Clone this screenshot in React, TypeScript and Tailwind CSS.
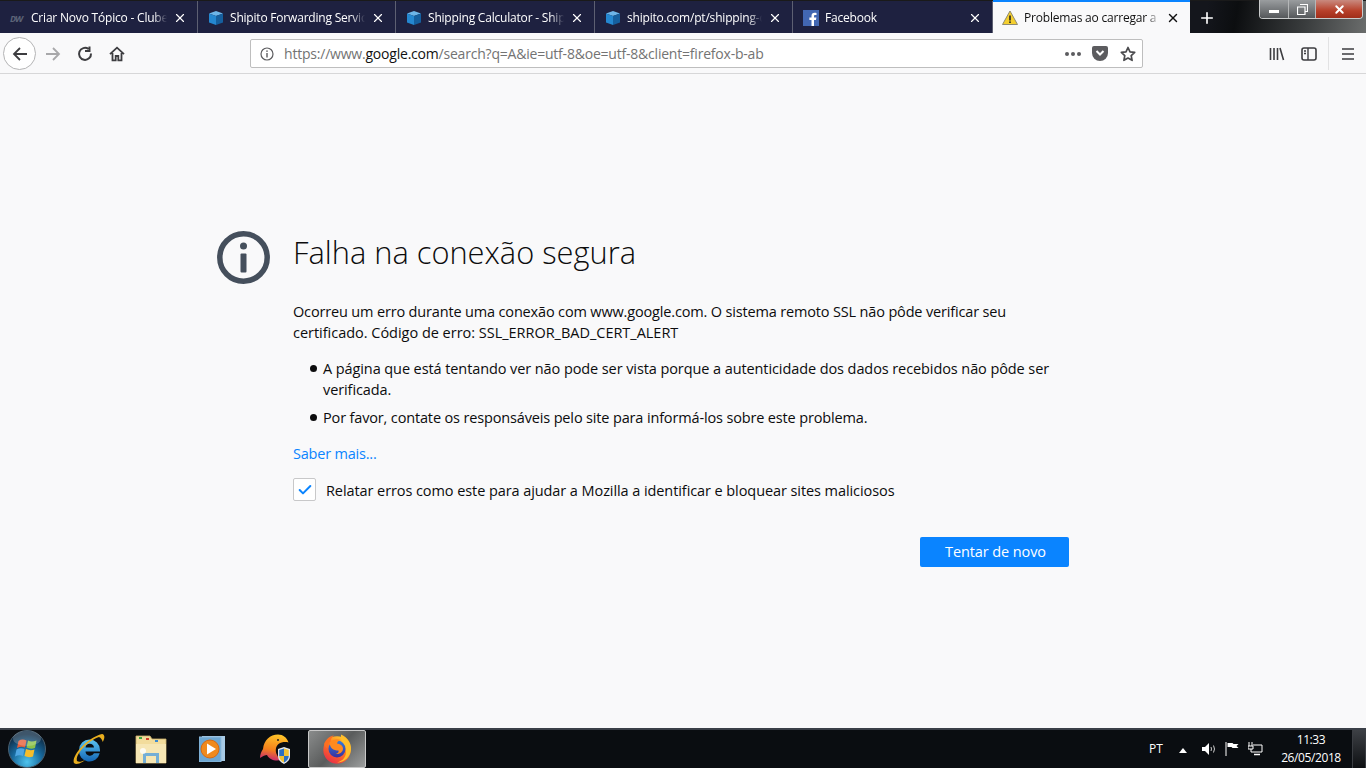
import { Check, Plus, X } from 'lucide-react'

const UI_FONT = "font-['Open_Sans','Noto_Sans',sans-serif]"

function CubeIcon() {
  return (
    <svg width="16" height="16" viewBox="0 0 16 16" className="shrink-0">
      <path d="M1 3.500 8 1l7 2.500-7 2.500z" fill="#6db5e8" />
      <path d="M1 3.500 8 6v9l-7-2.500z" fill="#2487d0" />
      <path d="M15 3.500 8 6v9l7-2.500z" fill="#155f9e" />
    </svg>
  )
}

function ClubeIcon() {
  return (
    <span className="w-[15px] shrink-0 text-[9px] font-bold italic leading-none tracking-[-1px] text-[#5c6478]">
      DW
    </span>
  )
}

function FacebookIcon() {
  return (
    <svg width="16" height="16" viewBox="0 0 16 16" className="shrink-0">
      <rect width="16" height="16" fill="#4267b2" />
      <path d="M11 16v-6h2l.4-2.400H11V6.200c0-.7.3-1.200 1.200-1.200h1.300V2.900c-.5-.1-1.200-.1-1.900-.1-1.900 0-3.100 1.100-3.100 3.200v1.600H6.400V10h2.100v6z" fill="#fff" />
    </svg>
  )
}

function WarningIcon() {
  return (
    <svg width="16" height="16" viewBox="0 0 16 16" className="shrink-0">
      <path d="M8 1 15.500 14.500H.5z" fill="#f5cf2e" stroke="#8f8a70" strokeWidth="1" strokeLinejoin="round" />
      <rect x="7.200" y="5.500" width="1.600" height="5" fill="#222" />
      <rect x="7.200" y="11.400" width="1.600" height="1.600" fill="#222" />
    </svg>
  )
}

const TABS = [
  { title: 'Criar Novo Tópico - Clube', icon: <ClubeIcon />, width: 'w-[198px]' },
  { title: 'Shipito Forwarding Service', icon: <CubeIcon />, width: 'w-[198px]' },
  { title: 'Shipping Calculator - Shipi', icon: <CubeIcon />, width: 'w-[199px]' },
  { title: 'shipito.com/pt/shipping-c', icon: <CubeIcon />, width: 'w-[198px]' },
  { title: 'Facebook', icon: <FacebookIcon />, width: 'w-[200px]' },
]

function TabBar() {
  return (
    <div className="flex h-[33px] shrink-0 border-t border-t-[#1a1a1a] bg-[linear-gradient(100deg,#14161c_0,#14161c_1190px,#0c0e10_1220px,#3a3d3e_1290px,#777978_1366px)]">
      {TABS.map((tab) => (
        <div
          key={tab.title}
          className={`${tab.width} flex h-full items-center border-r border-r-[#5d6072] bg-[#1e2140] pl-[10px] pr-[10px] pt-[2px] text-white`}
        >
          {tab.icon}
          <span className="ml-[6px] min-w-0 flex-1 overflow-hidden whitespace-nowrap text-[12px] tracking-[-0.2px] [mask-image:linear-gradient(90deg,#000_90%,transparent)]">
            {tab.title}
          </span>
          <X size={14} strokeWidth={2} className="ml-[6px] shrink-0" />
        </div>
      ))}
      <div className="relative flex h-full w-[197px] items-center bg-[#f9f9fa] pl-[9px] pr-[10px] pt-[2px] text-[#111]">
        <div className="absolute inset-x-0 -top-px h-[2px] bg-[#0a84ff]" />
        <WarningIcon />
        <span className="ml-[6px] min-w-0 flex-1 overflow-hidden whitespace-nowrap text-[12px] tracking-[-0.2px] [mask-image:linear-gradient(90deg,#000_90%,transparent)]">
          Problemas ao carregar a página
        </span>
        <X size={14} strokeWidth={2.400} className="ml-[6px] shrink-0" />
      </div>
      <div className="flex h-full w-[34px] items-center justify-center pt-[1px] text-white">
        <Plus size={18} strokeWidth={2.200} />
      </div>
      <div className="flex flex-1 justify-end">
        <div className="mr-[3px] -mt-px flex h-[19px] w-[104px] overflow-hidden rounded-b-[4px] border border-t-0 border-[#c9cbcc]">
          <div className="flex w-[29px] items-center justify-center border-r border-[#b5b7b8] bg-[linear-gradient(#9a9d9f,#55585b)]">
            <div className="mt-[4px] h-[3px] w-[10px] bg-white" />
          </div>
          <div className="flex w-[27px] items-center justify-center border-r border-[#b5b7b8] bg-[linear-gradient(#9a9d9f,#55585b)]">
            <svg width="11" height="11" viewBox="0 0 11 11">
              <path d="M3 .5h7.500v7H8M.5 3h7.500v7.500H.5z" fill="none" stroke="#fff" strokeWidth="1.200" />
            </svg>
          </div>
          <div className="flex flex-1 items-center justify-center bg-[linear-gradient(#c98a7f,#b7402a_60%,#a02e1a)]">
            <X size={13} strokeWidth={3.500} className="text-white" />
          </div>
        </div>
      </div>
    </div>
  )
}

function ToolbarIcon({ children, className = '' }: { children: React.ReactNode; className?: string }) {
  return (
    <svg width="16" height="16" viewBox="0 0 16 16" fill="none" stroke="#3d3d40" strokeWidth="1.700" className={`shrink-0 ${className}`}>
      {children}
    </svg>
  )
}

function Toolbar() {
  return (
    <div className="flex h-[41px] shrink-0 items-center border-b border-[#d7d7d8] bg-[#f9f9fa] pt-[1px]">
      <div className="ml-[3px] flex h-[33px] w-[33px] shrink-0 items-center justify-center rounded-full border border-[#b4b4b5] bg-white">
        <ToolbarIcon>
          <path d="M15 8H2M8 2 2 8l6 6" strokeWidth="1.800" />
        </ToolbarIcon>
      </div>
      <ToolbarIcon className="ml-[9px]">
        <path d="M1 8h13M8 2l6 6-6 6" stroke="#a8a8aa" strokeWidth="1.800" />
      </ToolbarIcon>
      <ToolbarIcon className="ml-[16px]">
        <path d="M14 7.500A6 6 0 1 1 11.500 3M12.500 .5V5H8" strokeWidth="2" />
      </ToolbarIcon>
      <ToolbarIcon className="ml-[16px]">
        <path d="M1 8.200 8 1.700l7 6.500M3.500 7v7.300h3.200V10h2.600v4.300h3.200V7" strokeWidth="1.800" />
      </ToolbarIcon>
      <div className="ml-[125px] flex h-[29px] w-[893px] shrink-0 items-center rounded-[2px] border border-[#bebebe] bg-white pl-[9px] pr-[6px]">
        <svg width="14" height="14" viewBox="0 0 14 14" className="shrink-0">
          <circle cx="7" cy="7" r="6" fill="none" stroke="#5c5c5f" strokeWidth="1.200" />
          <rect x="6.300" y="6" width="1.400" height="4.500" fill="#5c5c5f" />
          <rect x="6.300" y="3.400" width="1.400" height="1.500" fill="#5c5c5f" />
        </svg>
        <span className="ml-[10px] flex-1 whitespace-nowrap text-[14px] tracking-[-0.21px] text-[#737373]">
          https://www.<span className="text-[#111]">google.com</span>/search?q=A&amp;ie=utf-8&amp;oe=utf-8&amp;client=firefox-b-ab
        </span>
        <div className="flex gap-[2px]">
          <span className="h-[4px] w-[4px] rounded-full bg-[#5c5c5f]" />
          <span className="h-[4px] w-[4px] rounded-full bg-[#5c5c5f]" />
          <span className="h-[4px] w-[4px] rounded-full bg-[#5c5c5f]" />
        </div>
        <svg width="16" height="15" viewBox="0 0 16 15" className="ml-[11px] shrink-0">
          <path d="M2 0h12a2 2 0 0 1 2 2v5a8 8 0 0 1-16 0V2a2 2 0 0 1 2-2z" fill="#5c5c5f" />
          <path d="M4.500 5 8 8.500 11.500 5" fill="none" stroke="#fff" strokeWidth="2" />
        </svg>
        <svg width="16" height="16" viewBox="0 0 16 16" className="ml-[12px] shrink-0">
          <path d="m8 1.500 2 4.300 4.700.6-3.500 3.200.9 4.700L8 12l-4.100 2.300.9-4.700L1.300 6.400 6 5.800z" fill="none" stroke="#4a4a4d" strokeWidth="1.700" strokeLinejoin="round" />
        </svg>
      </div>
      <ToolbarIcon className="ml-[126px]">
        <path d="M1.500 2v12M5 2v12M8.500 2v12M11 2l3.500 12" strokeWidth="1.600" />
      </ToolbarIcon>
      <ToolbarIcon className="ml-[16px]">
        <rect x="1" y="2" width="14" height="12" rx="2" strokeWidth="1.600" />
        <path d="M7 2v12M3 5h2M3 7.500h2" strokeWidth="1.400" />
      </ToolbarIcon>
      <div className="ml-[11px] h-[33px] w-px bg-[#e2e2e3]" />
      <ToolbarIcon className="ml-[11px]">
        <path d="M2 3h12M2 8h12M2 13h12" strokeWidth="1.700" />
      </ToolbarIcon>
    </div>
  )
}

function Bullet({ children, className = '' }: { children: React.ReactNode; className?: string }) {
  return (
    <li className={`flex ${className}`}>
      <span className="mt-[7px] h-[7px] w-[7px] shrink-0 rounded-full bg-[#0c0c0d]" />
      <span className="ml-[6px]">{children}</span>
    </li>
  )
}

function ErrorPage() {
  return (
    <main className="flex min-h-0 flex-1 justify-start bg-[#f9f9fa] pl-[217px] pt-[157px] text-[#0c0c0d]">
      <svg width="54" height="54" viewBox="0 0 54 54" className="shrink-0">
        <circle cx="26.500" cy="26.500" r="23.700" fill="none" stroke="#454f5c" strokeWidth="5.500" />
        <circle cx="26.500" cy="15" r="3.500" fill="#454f5c" />
        <rect x="23.500" y="22.500" width="6" height="19" rx="1" fill="#454f5c" />
      </svg>
      <div className="ml-[22px] w-[776px]">
        <h1 className="-mt-[1px] text-[30.800px] font-light leading-[44px]">Falha na conexão segura</h1>
        <p className="mt-[27px] text-[14.500px] leading-[21px] tracking-[-0.16px]">
          Ocorreu um erro durante uma conexão com www.google.com. O sistema remoto SSL não pôde verificar seu
          <br />
          <span className="tracking-[-0.02px]">certificado. Código de erro: SSL_ERROR_BAD_CERT_ALERT</span>
        </p>
        <ul className="mt-[15px] pl-[17px] text-[14.500px] leading-[21px]">
          <Bullet className="tracking-[-0.09px]">
            A página que está tentando ver não pode ser vista porque a autenticidade dos dados recebidos não pôde ser verificada.
          </Bullet>
          <Bullet className="mt-[7px] tracking-[-0.15px]">
            Por favor, contate os responsáveis pelo site para informá-los sobre este problema.
          </Bullet>
        </ul>
        <a className="mt-[15px] block text-[14.500px] leading-[21px] tracking-[-0.2px] text-[#0a84ff]">Saber mais...</a>
        <label className="mt-[14px] flex items-center">
          <span className="flex h-[23px] w-[23px] items-center justify-center rounded-[2px] border border-[#c8c8c9] bg-white">
            <Check size={16} strokeWidth={3} className="text-[#0a84ff]" />
          </span>
          <span className="ml-[10px] pt-[2px] text-[14.500px] leading-[21px] tracking-[-0.08px]">
            Relatar erros como este para ajudar a Mozilla a identificar e bloquear sites maliciosos
          </span>
        </label>
        <div className="mt-[36px] flex justify-end">
          <button type="button" className="h-[30px] w-[149px] rounded-[2px] bg-[#0a84ff] pl-[2px] text-[14.500px] tracking-[-0.1px] text-white">
            Tentar de novo
          </button>
        </div>
      </div>
    </main>
  )
}

function WindowsOrb() {
  return (
    <svg width="38" height="38" viewBox="0 0 38 38" className="shrink-0">
      <defs>
        <radialGradient id="orb" cx="50%" cy="85%" r="75%">
          <stop offset="0" stopColor="#4fc4ee" />
          <stop offset="0.55" stopColor="#17689c" />
          <stop offset="1" stopColor="#0e2c46" />
        </radialGradient>
      </defs>
      <circle cx="19" cy="19" r="18.500" fill="url(#orb)" stroke="#4a6070" />
      <path d="M10.500 11q3.500-2.500 8-.5l-1.500 7q-4-1.800-8 .5z" fill="#e8603a" />
      <path d="M20 10.500q3.500 2 8.500 0l-1.500 7.500q-4.500 1.500-8.500-.5z" fill="#8dc24a" />
      <path d="M8.500 19.500q4-2.300 8-.5l-1.500 7q-4-1.500-8 .5z" fill="#4fa6e2" />
      <path d="M18 19q4 2 8.500.5l-1.500 7q-4.500 1.500-8.500-.5z" fill="#f7bd2a" />
      <ellipse cx="19" cy="8.500" rx="14" ry="7.500" fill="#fff" opacity="0.2" />
    </svg>
  )
}

function IeIcon() {
  return (
    <svg width="32" height="32" viewBox="0 0 32 32" className="shrink-0">
      <defs>
        <linearGradient id="ie" x1="0" y1="0" x2="0" y2="1">
          <stop offset="0" stopColor="#5cc4f2" />
          <stop offset="1" stopColor="#1366b4" />
        </linearGradient>
      </defs>
      <path d="M6 17a10.500 10.500 0 0 1 21 0v1.500H12.500a4.500 4.500 0 0 0 8.500 1.800h5.700A10.500 10.500 0 0 1 6 17zm6.500-2.500h8.500a4.300 4.300 0 0 0-8.500 0z" fill="url(#ie)" fillRule="evenodd" />
      <path d="M1 30C-2 24 13 5 29 1c3 .5 3 4 .8 8-.8-2.500-1.800-4-3.800-5C14 8 2 22 4 28c1.500 1.500 5 .8 8-1-4 3.500-9 5-11 3z" fill="#e9ae1e" />
    </svg>
  )
}

function FolderIcon() {
  return (
    <svg width="32" height="29" viewBox="0 0 32 29" className="shrink-0">
      <path d="M1 1h14l2 3h14v24H1z" fill="#f2dc9c" stroke="#c9b06c" strokeWidth="0.800" />
      <rect x="4" y="2" width="3" height="2" fill="#3fa63f" />
      <rect x="11" y="3" width="3" height="2" fill="#d2402c" />
      <rect x="20" y="5" width="3" height="2" fill="#3a8ad0" />
      <path d="M1 9h30v19H1z" fill="#f6e6b4" />
      <path d="M8 28V18h16v10h-3v-7H11v7z" fill="#74aed6" />
      <circle cx="8" cy="16" r="3" fill="#fff" opacity="0.8" />
    </svg>
  )
}

function PlayerIcon() {
  return (
    <svg width="26" height="26" viewBox="0 0 26 26" className="shrink-0">
      <rect x="3" y="0" width="23" height="25" fill="#a8cbe6" />
      <rect x="0" y="1" width="22" height="25" fill="#6da7d3" stroke="#8fbadb" />
      <circle cx="11" cy="13" r="9" fill="#f08a1d" stroke="#d96a10" />
      <path d="M8 7.500 17 13l-9 5.500z" fill="#fff" />
    </svg>
  )
}

function ThunderbirdIcon() {
  return (
    <svg width="30" height="30" viewBox="0 0 30 30" className="shrink-0">
      <defs>
        <linearGradient id="tb" x1="0.6" y1="0" x2="0.4" y2="1">
          <stop offset="0" stopColor="#ffc529" />
          <stop offset="0.6" stopColor="#f5801c" />
          <stop offset="1" stopColor="#c92a72" />
        </linearGradient>
      </defs>
      <path d="M3 15C4 6 10 .5 18 .5c5 0 9 3 10.500 8-3-1-7-.5-10 1.500-3 2.500-3.500 7-1.500 11 1 2 2 3.500 4 5-6 1.500-12-.5-14-5-2 0-4 1-7 3 0-3 1-6 3-9z" fill="url(#tb)" />
      <circle cx="18" cy="6" r="1" fill="#222" />
      <path d="M24 13l6 2v7c0 4-3 6.500-6 8-3-1.500-6-4-6-8v-7z" fill="#e4e7ec" />
      <path d="M24 14.500l-4.800 1.500v6h4.800z" fill="#2a6fc0" />
      <path d="M24 14.500l4.800 1.500v6H24z" fill="#f1c232" />
      <path d="M19.200 22H24v6.500c-2.400-1.200-4.800-3.500-4.800-6.500z" fill="#f1c232" />
      <path d="M28.800 22H24v6.500c2.400-1.200 4.800-3.500 4.800-6.500z" fill="#2a6fc0" />
    </svg>
  )
}

function FirefoxIcon() {
  return (
    <svg width="30" height="30" viewBox="0 0 30 30" className="shrink-0">
      <defs>
        <linearGradient id="fx" x1="0.8" y1="0" x2="0.2" y2="1">
          <stop offset="0" stopColor="#ffd02e" />
          <stop offset="0.45" stopColor="#ff7a1f" />
          <stop offset="1" stopColor="#e8274b" />
        </linearGradient>
        <linearGradient id="gl" x1="0.5" y1="0" x2="0.5" y2="1">
          <stop offset="0" stopColor="#2f7fe0" />
          <stop offset="1" stopColor="#3a2f9e" />
        </linearGradient>
      </defs>
      <circle cx="15" cy="16" r="13.700" fill="url(#fx)" />
      <path d="M19 .5c7 3 10.500 9 10 15-.5 7-6.500 13-14 13 6-1.500 9.500-6 9-12-.5-6-6-8-5-16z" fill="#ffbe2b" />
      <circle cx="15" cy="15" r="8.500" fill="url(#gl)" />
      <path d="M8 8c3-3 8-3.500 10.500-2-2 .5-3.500 2-3.500 3.500 3 .3 6 2 6 5 0 4-4 6-7.500 5.500 2.500-.5 3.500-2 3-3.500-5 0-9.500-2.500-8.500-8.500z" fill="#ff8a1f" />
      <path d="M2 10c2-5 6-8 10-8.500-2.500 2-3.500 4-3.500 6-2.500 1.500-4 4-4 7z" fill="#ff6f20" />
    </svg>
  )
}

function Taskbar() {
  return (
    <footer className="flex h-[40px] shrink-0 items-center border-t-2 border-t-[#3b4048] bg-[#0a0d11] text-white">
      <div className="ml-[8px] flex h-full items-center">
        <WindowsOrb />
      </div>
      <div className="ml-[27px] flex items-center">
        <IeIcon />
      </div>
      <div className="ml-[30px] flex items-center">
        <FolderIcon />
      </div>
      <div className="ml-[32px] flex items-center">
        <PlayerIcon />
      </div>
      <div className="ml-[35px] flex items-center">
        <ThunderbirdIcon />
      </div>
      <div className="ml-[18px] flex h-[38px] w-[58px] items-center justify-center rounded-[2px] border border-[#c8c8c8] bg-[linear-gradient(135deg,#8a8c8c,#5a5c5c_50%,#9c9e9e)]">
        <FirefoxIcon />
      </div>
      <div className="ml-auto flex h-full items-center">
        <span className="w-[24px] text-[12px]">PT</span>
        <svg width="8" height="5" viewBox="0 0 8 5" className="ml-[6px] mt-[3px]">
          <path d="M4 0l4 5H0z" fill="#fff" />
        </svg>
        <svg width="16" height="14" viewBox="0 0 16 14" className="ml-[14px]">
          <path d="M1 5h3l4-4v12l-4-4H1z" fill="#fff" />
          <path d="M10 5q1 2 0 4M12.500 3.500q2 3.500 0 7" fill="none" stroke="#ccc" />
        </svg>
        <svg width="15" height="14" viewBox="0 0 15 14" className="ml-[8px]">
          <path d="M1 0v14" stroke="#fff" />
          <path d="M2.500 1h5l1 1h5l-2 2 2 2h-6l-1-1h-4z" fill="#fff" />
        </svg>
        <svg width="15" height="14" viewBox="0 0 15 14" className="ml-[8px]">
          <path d="M1 0v4M4 0v4M0 4h5v3H0z" stroke="#fff" fill="none" />
          <path d="M5 3h9v7H3V7" stroke="#fff" fill="none" />
          <path d="M6 12.500h6" stroke="#fff" strokeWidth="1.500" />
        </svg>
        <div className="ml-[12px] w-[72px] text-center text-[12px] leading-[18px] tracking-[-0.4px]">
          <div>11:33</div>
          <div>26/05/2018</div>
        </div>
        <div className="ml-[5px] h-full w-[14px] border-x border-[#3a3d42] bg-[linear-gradient(#3d4045,#0d0f12)]" />
      </div>
    </footer>
  )
}

export default function App() {
  return (
    <div className={`flex h-screen w-full flex-col overflow-hidden ${UI_FONT}`}>
      <TabBar />
      <Toolbar />
      <ErrorPage />
      <Taskbar />
    </div>
  )
}
